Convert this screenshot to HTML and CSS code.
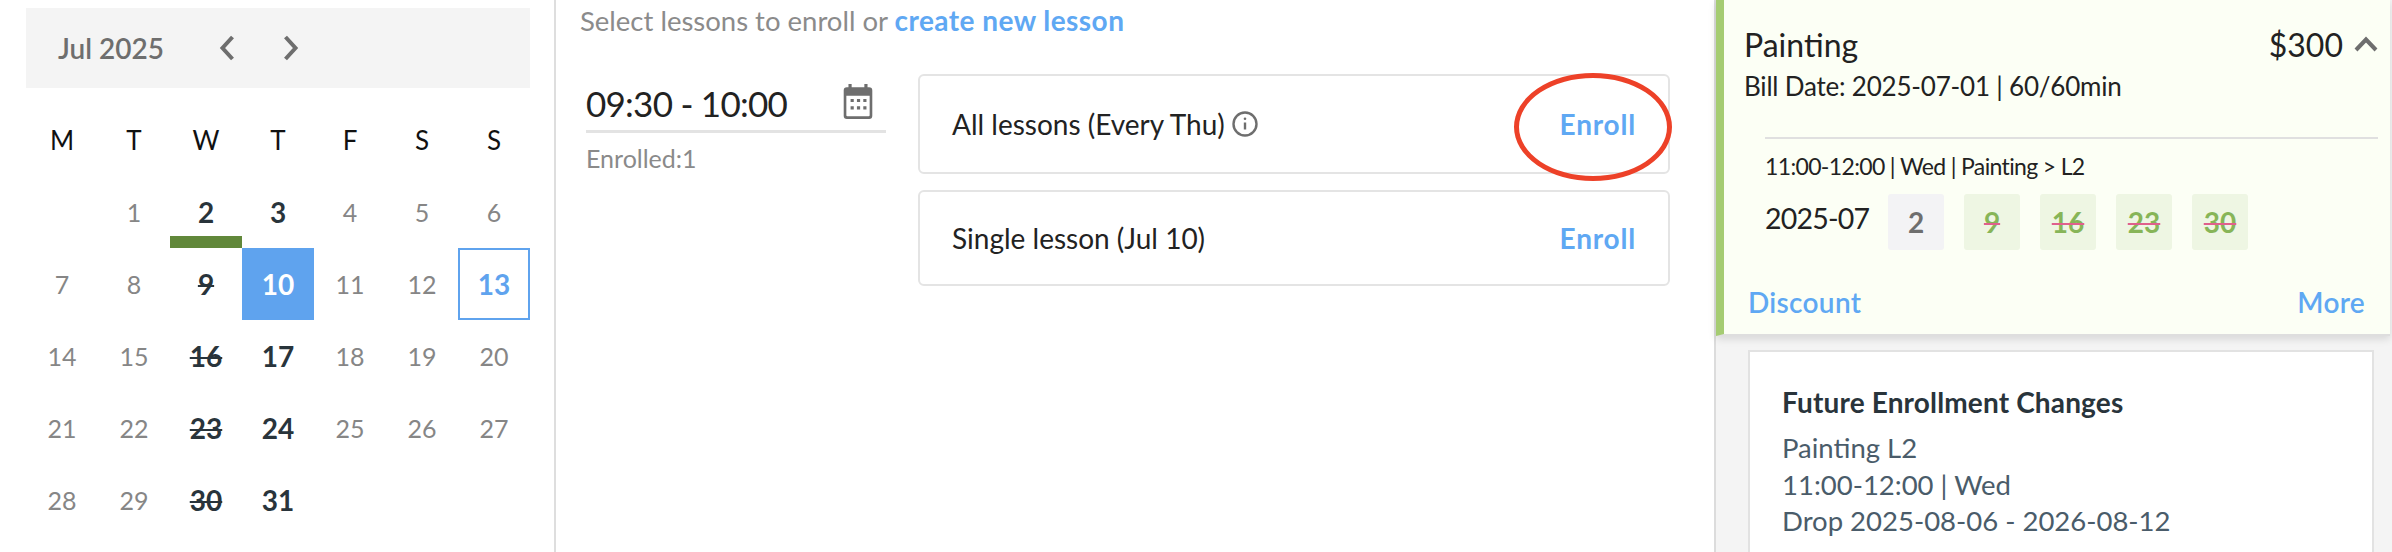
FILE: index.html
```html
<!DOCTYPE html>
<html lang="en">
<head>
<meta charset="utf-8">
<title>Enroll</title>
<link rel="stylesheet" href="styles.css">
</head>
<body>
<div class="page">
  <section class="cal-col">
    <div class="cal-head">
      <span class="cal-month">Jul 2025</span>
      <svg class="nav-icon" width="16" height="26" viewBox="0 0 16 26"><path d="M13.500 2 3.500 13 13.500 24" /></svg>
      <svg class="nav-icon" width="16" height="26" viewBox="0 0 16 26"><path d="M2.500 2 12.500 13 2.500 24" /></svg>
    </div>
    <div class="cal-grid">
      <div class="dow">M</div><div class="dow">T</div><div class="dow">W</div><div class="dow">T</div><div class="dow">F</div><div class="dow">S</div><div class="dow">S</div>
      <div class="day"></div><div class="day">1</div><div class="day on bar">2</div><div class="day on">3</div><div class="day">4</div><div class="day">5</div><div class="day">6</div>
      <div class="day">7</div><div class="day">8</div><div class="day on"><s>9</s></div><div class="day sel">10</div><div class="day">11</div><div class="day">12</div><div class="day today">13</div>
      <div class="day">14</div><div class="day">15</div><div class="day on"><s>16</s></div><div class="day on">17</div><div class="day">18</div><div class="day">19</div><div class="day">20</div>
      <div class="day">21</div><div class="day">22</div><div class="day on"><s>23</s></div><div class="day on">24</div><div class="day">25</div><div class="day">26</div><div class="day">27</div>
      <div class="day">28</div><div class="day">29</div><div class="day on"><s>30</s></div><div class="day on">31</div>
    </div>
  </section>

  <section class="mid-col">
    <p class="intro">Select lessons to enroll or <a class="link-strong">create new lesson</a></p>
    <div class="mid-body">
      <div class="time-box">
        <div class="time-field">
          <span class="time-text">09:30 - 10:00</span>
          <svg class="cal-icon" width="32" height="36" viewBox="0 0 28 34"><path class="cal-fill" fill-rule="evenodd" d="M5 1h3v3h12V1h3v3h1.500A3 3 0 0 1 27.500 7v24a3 3 0 0 1-3 3h-21a3 3 0 0 1-3-3V7a3 3 0 0 1 3-3H5zM3 12v18.500a1 1 0 0 0 1 1h20a1 1 0 0 0 1-1V12zM7 15h3v3H7zm6 0h3v3h-3zm6 0h3v3h-3zM7 22h3v3H7zm6 0h3v3h-3zm6 0h3v3h-3z"/></svg>
        </div>
        <div class="enrolled">Enrolled:1</div>
      </div>
      <div class="options">
        <div class="option opt-a">
          <span class="opt-label">All lessons (Every Thu)
            <svg class="info-icon" width="26" height="26" viewBox="0 0 26 26"><circle cx="13" cy="13" r="11.500"/><path d="M13 11.500v7"/><circle class="info-dot" cx="13" cy="7.800" r="1.300"/></svg>
          </span>
          <a class="enroll">Enroll</a>
          <span class="ring"></span>
        </div>
        <div class="option opt-b">
          <span class="opt-label">Single lesson (Jul 10)</span>
          <a class="enroll">Enroll</a>
        </div>
      </div>
    </div>
  </section>

  <aside class="right-col">
    <div class="plan">
      <div class="plan-top">
        <span class="plan-name">Painting</span>
        <span class="plan-price">$300
          <svg class="chev" width="24" height="16" viewBox="0 0 24 16"><path d="M2 14 12 3.500 22 14"/></svg>
        </span>
      </div>
      <div class="plan-bill">Bill Date: 2025-07-01 | 60/60min</div>
      <div class="plan-inner">
        <div class="plan-line">11:00-12:00 | Wed | Painting &gt; L2</div>
        <div class="plan-dates">
          <span class="plan-month">2025-07</span>
          <span class="chip chip-grey">2</span>
          <span class="chip"><s>9</s></span>
          <span class="chip"><s>16</s></span>
          <span class="chip"><s>23</s></span>
          <span class="chip"><s>30</s></span>
        </div>
      </div>
      <div class="plan-foot">
        <a class="link">Discount</a>
        <a class="link">More</a>
      </div>
    </div>
    <div class="changes">
      <h3 class="changes-title">Future Enrollment Changes</h3>
      <div class="changes-text">Painting L2</div>
      <div class="changes-text">11:00-12:00 | Wed</div>
      <div class="changes-text">Drop 2025-08-06 - 2026-08-12</div>
    </div>
  </aside>
</div>
</body>
</html>
```
FILE: styles.css
```css
* { box-sizing: border-box; }
html, body { margin: 0; padding: 0; background: #fff; }
body { width: 2392px; height: 552px; overflow: hidden; font-family: Lato, "Noto Sans", sans-serif; }
a { text-decoration: none; }
.page { display: flex; height: 552px; }

/* Calendar column */
.cal-col { width: 556px; padding: 8px 24px 0 26px; border-right: 2px solid #dedede; flex: none; }
.cal-head { height: 80px; background: #f4f4f4; display: flex; align-items: center; padding-left: 32px; }
.cal-month { font-size: 28px; font-weight: 600; color: #6e6e6e; width: 161px; }
.nav-icon { fill: none; stroke: #6e6e6e; stroke-width: 4; margin-right: 48px; }
.cal-grid { display: grid; grid-template-columns: repeat(7, 72px); grid-auto-rows: 72px; margin-top: 16px; }
.dow { font-size: 26px; color: #111; display: flex; align-items: center; justify-content: center; }
.day { font-size: 25px; color: #868686; display: flex; align-items: center; justify-content: center; position: relative; }
.day.on { color: #29343b; font-weight: 700; font-size: 28px; }
.day s { text-decoration-thickness: 2px; }
.day.bar::after { content: ""; position: absolute; left: 0; right: 0; bottom: 0; height: 12px; background: #61883a; }
.day.sel { background: #5fa3ee; color: #fff; font-weight: 700; font-size: 28px; }
.day.today { border: 2px solid #5fa3ee; color: #5fa3ee; font-weight: 700; font-size: 28px; }

/* Middle column */
.mid-col { width: 1158px; flex: none; padding: 4px 0 0 24px; }
.intro { margin: 0; font-size: 27.500px; line-height: 32px; color: #8b8b8b; }
.link-strong { color: #5fa8f3; font-weight: 700; font-size: 28px; letter-spacing: .45px; }
.mid-body { display: flex; margin-top: 38px; padding-left: 6px; }
.time-box { width: 300px; flex: none; }
.time-field { height: 58px; border-bottom: 3px solid #e3e3e3; display: flex; justify-content: space-between; padding-right: 12px; padding-top: 7px; }
.time-text { font-size: 35px; letter-spacing: -.75px; line-height: 42px; color: #222; }
.cal-icon { margin-top: 1px; }
.enrolled { font-size: 25px; color: #8a8a8a; margin-top: 10px; }
.options { width: 752px; margin-left: 32px; margin-top: -1px; display: flex; flex-direction: column; gap: 16px; }
.option { position: relative; border: 2px solid #e4e4e4; border-radius: 6px; display: flex; align-items: center; justify-content: space-between; padding: 0 32px 0 32px; }
.opt-a { height: 100px; }
.opt-b { height: 96px; }
.opt-label { font-size: 28px; color: #222; display: inline-flex; align-items: center; gap: 7px; }
.enroll { font-size: 28px; font-weight: 700; color: #5fa8f3; letter-spacing: .8px; }
.cal-fill { fill: #6e6e6e; }
.info-icon { fill: none; stroke: #6e6e6e; stroke-width: 2.400; }
.info-dot { fill: #6e6e6e; stroke: none; }
.ring { position: absolute; left: 594px; top: -3px; width: 158px; height: 108px; border: 5px solid #ed4128; border-radius: 50%; }

/* Right column */
.right-col { width: 678px; flex: none; border-left: 2px solid #dcdcdc; background: #f4f4f4; height: 552px; display: flex; flex-direction: column; }
.plan { height: 336px; flex: none; margin-right: 2px; background: #fcfff5; border-left: 8px solid #a5cc72; border-bottom: 2px solid #dedede; box-shadow: 0 3px 8px rgba(0,0,0,.12); padding: 25px 12px 0 20px; position: relative; }
.plan-top { display: flex; justify-content: space-between; align-items: center; height: 38px; }
.plan-name { font-size: 32px; color: #222; }
.plan-price { font-size: 32px; color: #222; display: inline-flex; align-items: center; gap: 11px; }
.chev { fill: none; stroke: #6e6e6e; stroke-width: 4; }
.plan-bill { font-size: 26px; letter-spacing: -.2px; color: #222; margin-top: 7px; }
.plan-inner { margin: 35px 0 0 21px; border-top: 2px solid #e0e0e0; }
.plan-line { font-size: 23px; letter-spacing: -.65px; color: #222; margin-top: 12px; line-height: 30px; }
.plan-dates { display: flex; align-items: flex-start; margin-top: 13px; }
.plan-month { font-size: 28.500px; letter-spacing: -.8px; color: #222; line-height: 48px; width: 123px; flex: none; }
.chip { width: 56px; height: 56px; flex: none; border-radius: 3px; background: #eef6e3; color: #87b558; font-size: 28px; font-weight: 700; margin-right: 20px; display: flex; align-items: center; justify-content: center; }
.chip s { text-decoration-color: #e0608c; text-decoration-thickness: 2px; }
.chip-grey { background: #f3f3f5; color: #6e6e6e; }
.plan-foot { display: flex; justify-content: space-between; position: absolute; left: 24px; right: 25px; bottom: 15px; }
.link { font-size: 28px; font-weight: 600; letter-spacing: .3px; color: #5fa8f3; }
.changes { flex: 1; background: #fff; border: 2px solid #e2e2e2; border-bottom: 0; margin: 14px 18px 0 32px; padding: 33px 32px 0; }
.changes-title { margin: 0 0 11px; font-size: 28px; letter-spacing: .15px; line-height: 34px; font-weight: 700; color: #29343b; }
.changes-text { font-size: 27.500px; line-height: 36.500px; color: #4a5c6a; }
```
